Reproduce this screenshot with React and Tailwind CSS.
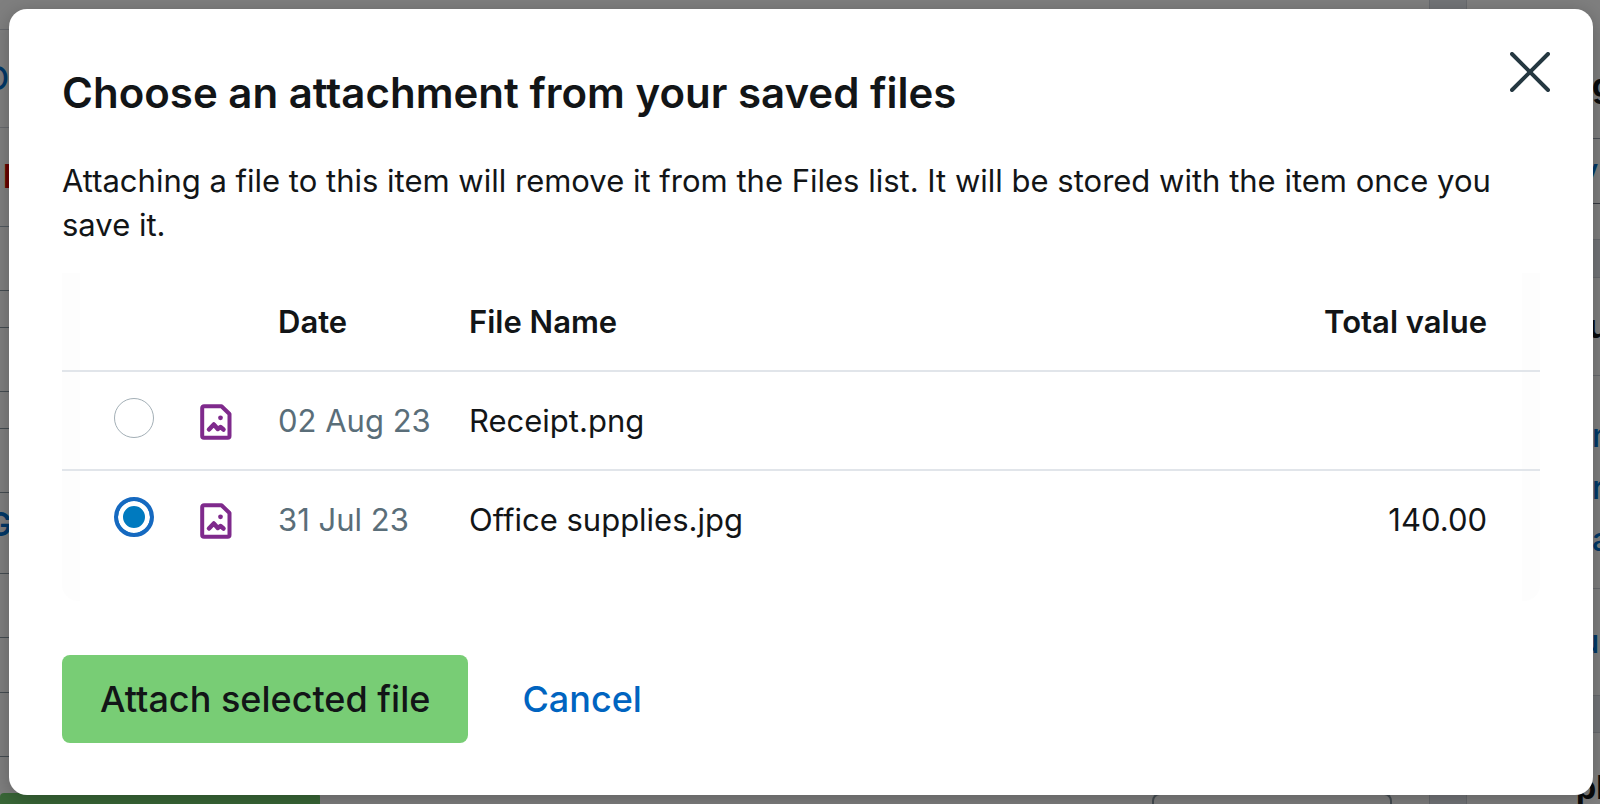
import { useState } from 'react';

const files = [
  { id: 1, date: '02 Aug 23', name: 'Receipt.png', total: '' },
  { id: 2, date: '31 Jul 23', name: 'Office supplies.jpg', total: '140.00' },
];

// Purple document icon with a small picture inside
function ImageFileIcon() {
  return (
    <svg className="block w-8 h-9" viewBox="0 0 32 36" fill="none" stroke="#7f2a8c" aria-hidden="true">
      <path d="M4 2.200h17.500L29.500 10v22a1.800 1.800 0 0 1-1.800 1.800H4A1.800 1.800 0 0 1 2.200 32V4A1.800 1.800 0 0 1 4 2.200z" strokeWidth="4" strokeLinejoin="round" />
      <path d="M9 25.500l4.800-5 4 4.500 2.700-2 3 2.500" strokeWidth="4.500" strokeLinecap="round" strokeLinejoin="round" />
      <circle cx="20.500" cy="13.800" r="2.400" fill="#7f2a8c" stroke="none" />
    </svg>
  );
}

// The page that sits behind the dialog
function PageBehind() {
  return (
    <div className="flex h-screen overflow-hidden bg-white text-[32px] leading-none" aria-hidden="true">
      <div className="flex flex-1 flex-col">
        <div className="h-[30px] border-b border-gray-300"></div>
        <div className="flex h-[98px] items-center border-b border-gray-300">
          <span className="flex w-[9px] justify-end font-medium text-[#0070d0]">O</span>
        </div>
        <div className="flex h-[99px] items-center border-b border-[#a5b5c0] pl-[3px]">
          <span className="font-bold text-[#d00000]">I</span>
        </div>
        <div className="h-16 border-b border-[#8a9aa5]"></div>
        <div className="h-[37px] border-b border-[#8a9aa5]"></div>
        <div className="h-16 border-b border-[#8a9aa5]"></div>
        <div className="h-[37px] border-b border-[#8a9aa5]"></div>
        <div className="h-16 border-b border-[#8a9aa5]"></div>
        <div className="flex h-[81px] items-start border-b border-[#8a9aa5] pt-4">
          <span className="flex w-3 justify-end font-semibold text-[#0070d0]">G</span>
        </div>
        <div className="h-16 border-b border-[#8a9aa5]"></div>
        <div className="h-[55px] border-b border-[#8a9aa5]"></div>
        <div className="h-16 border-b border-[#8a9aa5]"></div>
        <div className="flex flex-1 items-stretch pt-9">
          <div className="w-80 rounded-t bg-[#72cf6f]"></div>
          <div className="ml-auto mr-[37px] w-60 rounded-t-lg border-2 border-b-0 border-[#8a9aa5]"></div>
        </div>
      </div>
      <div className="w-[38px] border-x border-gray-300 bg-[#e6ebf1]"></div>
      <div className="flex w-[133px] flex-col font-medium text-[#0070d0]">
        <div className="flex h-[139px] items-end justify-end border-b border-gray-400 pb-9">
          <span className="w-2 font-bold text-[#121517]">g</span>
        </div>
        <div className="flex h-[65px] items-center justify-end border-b border-gray-500">
          <span className="w-5">y</span>
        </div>
        <div className="h-9 border-b border-gray-300"></div>
        <div className="h-[38px] border-b border-gray-300 bg-[#e6ebf1]"></div>
        <div className="flex h-[98px] items-center justify-end border-b border-gray-300">
          <span className="w-3 font-bold text-[#121517]">u</span>
        </div>
        <div className="flex h-[213px] flex-col items-end justify-end gap-5 border-b border-gray-300 pb-8">
          <span className="w-2">n</span>
          <span className="w-2">r</span>
          <span className="w-2">a</span>
        </div>
        <div className="flex h-[107px] items-center justify-end border-b border-gray-300">
          <span className="w-5">u</span>
        </div>
        <div className="h-[37px] border-b border-gray-300 bg-[#e6ebf1]"></div>
        <div className="flex flex-1 items-end justify-end">
          <span className="w-6 font-bold text-[#121517]">pl</span>
        </div>
      </div>
    </div>
  );
}

export default function App() {
  const [selected, setSelected] = useState(2);

  return (
    <div className="relative font-['Inter','Liberation_Sans',sans-serif] text-[#121517]">
      <PageBehind />

      <div className="absolute inset-0 flex bg-black/50 py-[9px] pl-[9px] pr-[7px]">
        <div
          role="dialog"
          aria-modal="true"
          aria-labelledby="dialog-title"
          className="flex-1 rounded-[18px] bg-white px-[53px] pt-[43px] shadow-[0_4px_20px_rgba(0,0,0,0.25)]"
        >
          <div className="flex items-start justify-between">
            <h1 id="dialog-title" className="pt-[11px] text-[42px] leading-[60px] font-semibold">
              Choose an attachment from your saved files
            </h1>
            <button type="button" aria-label="Close" className="-mr-[10px]">
              <svg className="block size-10" viewBox="0 0 40 40" stroke="#253841" strokeWidth="4" strokeLinecap="round" aria-hidden="true">
                <path d="M2 2l36 36M38 2L2 38" />
              </svg>
            </button>
          </div>

          <p className="mt-9 text-[31px] leading-[44px]">
            Attaching a file to this item will remove it from the Files list. It will be stored with the item once you
            save it.
          </p>

          {/* Saved files */}
          <div className="mt-[26px] rounded-b-2xl bg-[linear-gradient(to_right,#fdfdfd_18px,#fff_18px,#fff_calc(100%-18px),#fdfdfd_calc(100%-18px))] pb-8">
            <table className="w-full table-fixed text-[31px] leading-[44px]">
              <thead>
                <tr className="h-[98px] border-b-2 border-[#e1e5ea] text-left">
                  <td className="w-[138px]"></td>
                  <td className="w-[78px]"></td>
                  <th scope="col" className="w-[191px] font-semibold">Date</th>
                  <th scope="col" className="font-semibold">File Name</th>
                  <th scope="col" className="w-[320px] pr-[53px] text-right font-semibold">Total value</th>
                </tr>
              </thead>
              <tbody>
                {files.map((file) => (
                  <tr key={file.id} className="h-[99px] border-b-2 border-[#e1e5ea] last:border-b-0">
                    <td className="pb-1.5 pl-[52px]">
                      <input
                        type="radio"
                        id={`file-${file.id}`}
                        name="file"
                        checked={selected === file.id}
                        onChange={() => setSelected(file.id)}
                        className="block size-10 appearance-none rounded-full border border-[#a3afb6] bg-white checked:border-4 checked:border-[#1569c0] checked:bg-[#007abf] checked:shadow-[inset_0_0_0_5px_#fff]"
                      />
                    </td>
                    <td className="pt-0.5">
                      <ImageFileIcon />
                    </td>
                    <td className="whitespace-nowrap text-[#5a6e79]">{file.date}</td>
                    <td>
                      <label htmlFor={`file-${file.id}`}>{file.name}</label>
                    </td>
                    <td className="pr-[53px] text-right">{file.total}</td>
                  </tr>
                ))}
              </tbody>
            </table>
          </div>

          <div className="mt-[54px] flex items-center gap-[54px] text-[36px] leading-[48px] font-medium">
            <button type="button" className="rounded-lg bg-[#78cd75] px-[38px] py-5">
              Attach selected file
            </button>
            <button type="button" className="text-[#0064c0]">
              Cancel
            </button>
          </div>
        </div>
      </div>
    </div>
  );
}
